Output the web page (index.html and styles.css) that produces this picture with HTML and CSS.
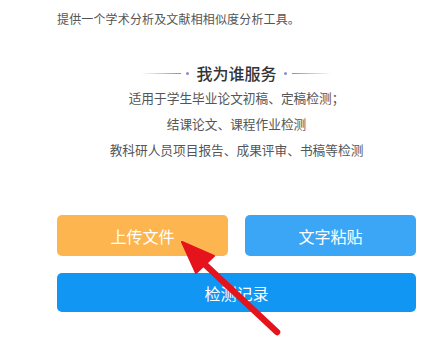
FILE: index.html
```html
<!DOCTYPE html>
<html lang="zh">
<head>
<meta charset="utf-8">
<link rel="stylesheet" href="styles.css">
</head>
<body>
<div class="page">
  <p class="intro">提供一个学术分析及文献相相似度分析工具。</p>
  <div class="title-row">
    <span class="line line-left"></span>
    <span class="dot"></span>
    <h2 class="title">我为谁服务</h2>
    <span class="dot"></span>
    <span class="line line-right"></span>
  </div>
  <div class="desc">
    <p>适用于学生毕业论文初稿、定稿检测；</p>
    <p>结课论文、课程作业检测</p>
    <p>教科研人员项目报告、成果评审、书稿等检测</p>
  </div>
  <div class="btn-row">
    <button class="btn btn-orange">上传文件</button>
    <button class="btn btn-light">文字粘贴</button>
  </div>
  <button class="btn btn-blue btn-wide">检测记录</button>
</div>
<svg class="arrow" width="447" height="347" viewBox="0 0 447 347">
  <line x1="277" y1="332" x2="198" y2="258" stroke="#e5141c" stroke-width="6.5" stroke-linecap="round"/>
  <polygon points="182,242 214,256 196,273" fill="#e5141c" stroke="#e5141c" stroke-width="2" stroke-linejoin="round"/>
</svg>
</body>
</html>
```
FILE: styles.css
```css
html, body {
  margin: 0;
  padding: 0;
  background: #fff;
}
body {
  width: 447px;
  height: 347px;
  overflow: hidden;
  position: relative;
  font-family: "Noto Sans CJK SC", "Noto Sans", sans-serif;
}
.page {
  margin-left: 57px;
  width: 359px;
  padding-top: 11px;
}
.intro {
  margin: 0;
  font-size: 12px;
  line-height: 16px;
  color: #555;
  letter-spacing: 0.15px;
}
.title-row {
  margin-top: 36px;
  height: 20px;
  display: flex;
  align-items: center;
  justify-content: center;
}
.line {
  display: block;
  width: 40px;
  height: 1px;
}
.line-left {
  background: linear-gradient(to right, rgba(140,140,210,0), #8a8ad2);
}
.line-right {
  background: linear-gradient(to left, rgba(140,140,210,0), #8a8ad2);
}
.dot {
  display: block;
  width: 3px;
  height: 3px;
  border-radius: 50%;
  background: #8a8ad2;
  margin: 1px 5px 0;
}
.title {
  margin: 0 2px;
  font-size: 16px;
  line-height: 20px;
  font-weight: 500;
  color: #333;
}
.desc {
  margin-top: 2px;
  text-align: center;
}
.desc p {
  margin: 0;
  font-size: 12.7px;
  line-height: 26px;
  color: #555;
}
.btn-row {
  margin-top: 52px;
  display: flex;
  gap: 17px;
}
.btn {
  border: none;
  border-radius: 5px;
  color: #fff;
  font-family: "Noto Sans CJK SC", "Noto Sans", sans-serif;
  font-size: 16px;
  padding: 0;
}
.btn-row .btn {
  height: 41px;
}
.btn-orange {
  width: 171px;
  background: #fdb54f;
}
.btn-light {
  width: 171px;
  background: #3ba6f6;
}
.btn-blue {
  background: #1196f4;
}
.btn-wide {
  display: block;
  margin-top: 17px;
  width: 359px;
  height: 39px;
}
.arrow {
  position: absolute;
  left: 0;
  top: 0;
  pointer-events: none;
}
```
